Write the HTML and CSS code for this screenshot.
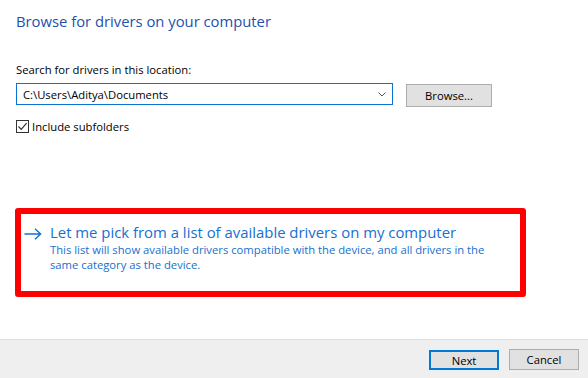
FILE: index.html
```html
<!DOCTYPE html>
<html>
<head>
<meta charset="utf-8">
<link rel="stylesheet" href="styles.css">
</head>
<body>
<div class="dialog">
  <main class="content">
    <h1 class="title">Browse for drivers on your computer</h1>
    <div class="label">Search for drivers in this location:</div>
    <div class="path-row">
      <div class="combo">
        <span class="combo-text">C:\Users\Aditya\Documents</span>
        <svg class="chev" width="8" height="5" viewBox="0 0 8 5"><path d="M0.5 0.5 L4 4 L7.5 0.5" fill="none" stroke="#5a5a5a" stroke-width="1"/></svg>
      </div>
      <button class="btn browse">Browse...</button>
    </div>
    <label class="check">
      <span class="box"><svg width="11" height="11" viewBox="0 0 11 11"><path d="M1.5 5.5 L4.2 8.3 L9.6 2.2" fill="none" stroke="#333" stroke-width="1.2"/></svg></span>
      <span>Include subfolders</span>
    </label>
    <div class="highlight">
      <div class="cmdlink">
        <svg class="arrow" width="18" height="12" viewBox="0 0 18 12"><path d="M0.5 6 H16.5 M11 0.8 L16.6 6 L11 11.2" fill="none" stroke="#1670d0" stroke-width="1.4"/></svg>
        <div class="cl-body">
          <div class="cl-title">Let me pick from a list of available drivers on my computer</div>
          <div class="cl-desc">This list will show available drivers compatible with the device, and all drivers in the same category as the device.</div>
        </div>
      </div>
    </div>
  </main>
  <footer class="footer">
    <button class="btn next">Next</button>
    <button class="btn cancel">Cancel</button>
  </footer>
</div>
</body>
</html>
```
FILE: styles.css
```css
* { box-sizing: border-box; }
html, body { margin: 0; padding: 0; background: #fff; }
body { font-family: "Open Sans", "Noto Sans", sans-serif; color: #000; }
.dialog { width: 588px; height: 378px; display: flex; flex-direction: column; overflow: hidden; }
.content { flex: 1; padding: 0 0 0 16px; }
.title { margin: 10px 0 0 0; font-weight: normal; font-size: 14.8px; line-height: 22px; color: #1e50b0; }
.label { margin-top: 30px; font-size: 11.25px; line-height: 16px; }
.path-row { display: flex; align-items: flex-start; gap: 13px; margin-top: 5px; }
.combo { width: 377px; height: 22px; border: 1px solid #0a74d0; display: flex; align-items: center; justify-content: space-between; padding: 0 6px 0 6px; font-size: 11.25px; }
.chev { margin-top: 1px; }
.btn { font-family: inherit; font-size: 11.25px; background: #e1e1e1; border: 1px solid #adadad; color: #000; padding: 0; margin: 0; }
.browse { width: 86px; height: 23px; margin-top: 1px; }
.check { display: flex; align-items: center; gap: 3px; margin-top: 12px; font-size: 11.25px; line-height: 15px; }
.box { width: 13px; height: 13px; border: 1px solid #333; display: flex; align-items: center; justify-content: center; }
.highlight { margin: 74px 0 0 -1px; width: 511px; height: 89px; border: 6px solid #ff0000; border-radius: 3px; padding: 8px 0 0 3px; }
.cmdlink { display: flex; align-items: flex-start; gap: 8px; }
.arrow { margin-top: 6px; flex-shrink: 0; }
.cl-title { font-size: 14.9px; line-height: 20px; color: #1670d0; }
.cl-desc { font-size: 11.25px; line-height: 15px; color: #1670d0; width: 445px; }
.footer { height: 39px; background: #efefef; border-top: 1px solid #dedede; display: flex; justify-content: flex-end; align-items: flex-start; gap: 10px; padding: 9px 9px 0 0; }
.next, .cancel { width: 70px; height: 21px; }
.next { border: 2px solid #0078d7; margin-top: 1px; height: 20px; }
```
